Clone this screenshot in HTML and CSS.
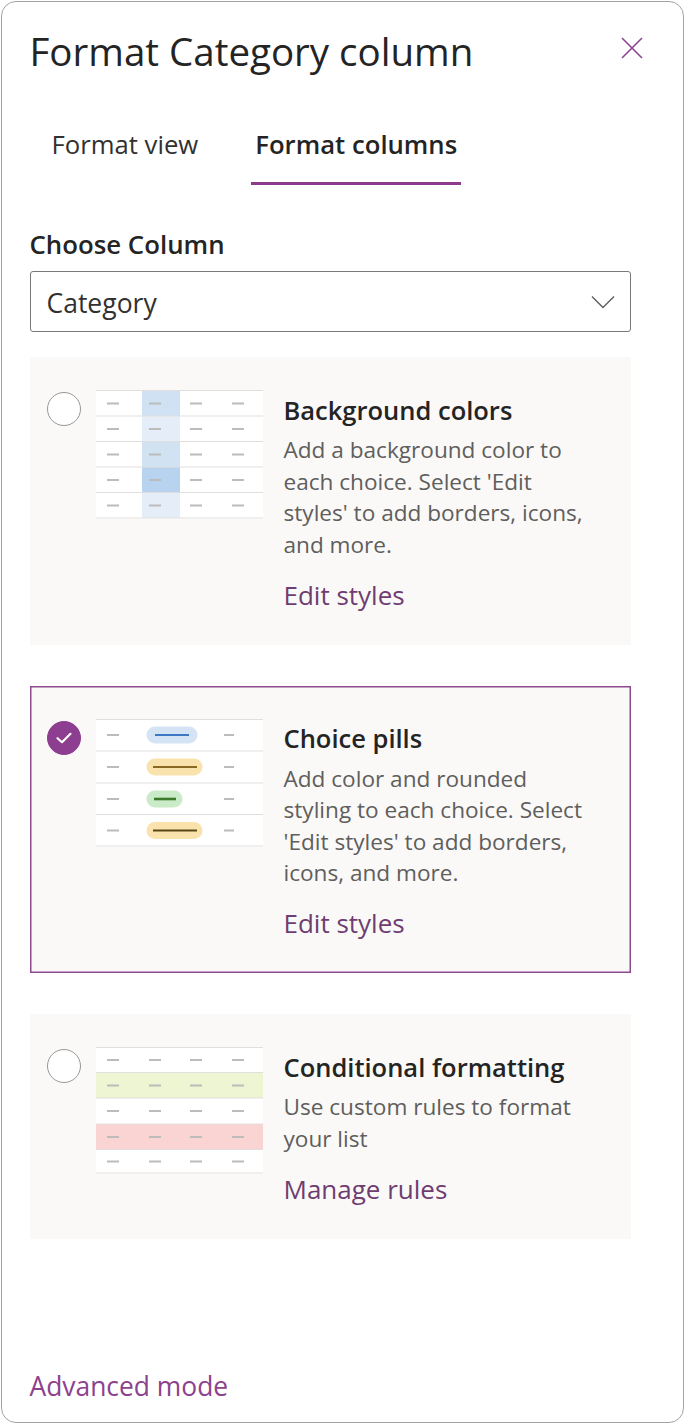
FILE: index.html
```html
<!DOCTYPE html>
<html lang="en">
<head>
<meta charset="utf-8">
<title>Format Category column</title>
<link rel="stylesheet" href="styles.css">
</head>
<body>
<div class="panel">
  <header class="header">
    <h1 class="title">Format Category column</h1>
    <button class="close" aria-label="Close">
      <svg width="22" height="22" viewBox="0 0 22 22"><path d="M1 1 L21 21 M21 1 L1 21" stroke="#8e4290" stroke-width="1.6" fill="none"/></svg>
    </button>
  </header>

  <nav class="tabs">
    <div class="tab">Format view</div>
    <div class="tab active">Format columns</div>
  </nav>

  <div class="field-label">Choose Column</div>
  <div class="dropdown">
    <span class="dropdown-value">Category</span>
    <svg class="chevron" width="24" height="14" viewBox="0 0 24 14"><path d="M1 1.5 L12 12.5 L23 1.5" stroke="#605e5c" stroke-width="1.4" fill="none"/></svg>
  </div>

  <div class="options">
    <div class="option">
      <span class="radio"></span>
      <svg class="thumb" width="167" height="129" viewBox="0 0 167 129">
        <rect x="0" y="0" width="167" height="129" fill="#ffffff"/>
        <rect x="46" y="0.5" width="38" height="25.5" fill="#cfe1f3"/>
        <rect x="46" y="26" width="38" height="25.5" fill="#e5eef8"/>
        <rect x="46" y="51.5" width="38" height="25.5" fill="#d1e3f3"/>
        <rect x="46" y="77" width="38" height="25.5" fill="#b7d3ef"/>
        <rect x="46" y="102.5" width="38" height="25.5" fill="#e5eef8"/>
        <g stroke="#e1dfdd" stroke-width="1">
          <line x1="0" y1="0.5" x2="167" y2="0.5"/>
          <line x1="0" y1="26" x2="167" y2="26"/>
          <line x1="0" y1="51.5" x2="167" y2="51.5"/>
          <line x1="0" y1="77" x2="167" y2="77"/>
          <line x1="0" y1="102.5" x2="167" y2="102.5"/>
          <line x1="0" y1="128" x2="167" y2="128"/>
        </g>
        <g stroke="#bebcba" stroke-width="1.8">
          <path d="M11 13.5h12M53 13.5h12M94 13.5h12M136 13.5h12"/>
          <path d="M11 39h12M53 39h12M94 39h12M136 39h12"/>
          <path d="M11 64.5h12M53 64.5h12M94 64.5h12M136 64.5h12"/>
          <path d="M11 90h12M53 90h12M94 90h12M136 90h12"/>
          <path d="M11 115.5h12M53 115.5h12M94 115.5h12M136 115.5h12"/>
        </g>
      </svg>
      <div class="option-text">
        <div class="option-title">Background colors</div>
        <div class="option-desc">Add a background color to each choice. Select 'Edit styles' to add borders, icons, and more.</div>
        <a class="option-link">Edit styles</a>
      </div>
    </div>

    <div class="option selected">
      <span class="radio checked">
        <svg width="18" height="14" viewBox="0 0 18 14"><path d="M2.5 7.2 L7 11.2 L15.5 2.8" stroke="#ffffff" stroke-width="2.2" fill="none" stroke-linecap="round" stroke-linejoin="round"/></svg>
      </span>
      <svg class="thumb" width="167" height="128" viewBox="0 0 167 128">
        <rect x="0" y="0" width="167" height="128" fill="#ffffff"/>
        <g stroke="#e1dfdd" stroke-width="1">
          <line x1="0" y1="0.5" x2="167" y2="0.5"/>
          <line x1="0" y1="32" x2="167" y2="32"/>
          <line x1="0" y1="64" x2="167" y2="64"/>
          <line x1="0" y1="95.5" x2="167" y2="95.5"/>
          <line x1="0" y1="127" x2="167" y2="127"/>
        </g>
        <g stroke="#bebcba" stroke-width="1.8">
          <path d="M11 16h12M128 16h10"/>
          <path d="M11 48h12M128 48h10"/>
          <path d="M11 80h12M128 80h10"/>
          <path d="M11 111.5h12M128 111.5h10"/>
        </g>
        <rect x="50.5" y="7.5" width="51" height="17" rx="8.5" fill="#d4e4f5"/>
        <line x1="59" y1="16" x2="93" y2="16" stroke="#3c78c3" stroke-width="1.8"/>
        <rect x="50.5" y="39.5" width="56" height="17" rx="8.5" fill="#fae2ad"/>
        <line x1="57" y1="48" x2="101" y2="48" stroke="#8a6a22" stroke-width="2.2"/>
        <rect x="50.5" y="71.5" width="36" height="17" rx="8.5" fill="#c9ebc8"/>
        <line x1="58" y1="80" x2="80" y2="80" stroke="#3d7a2b" stroke-width="2.6"/>
        <rect x="50.5" y="103" width="56" height="17" rx="8.5" fill="#fae2ad"/>
        <line x1="57" y1="111.5" x2="101" y2="111.5" stroke="#5a4612" stroke-width="2.2"/>
      </svg>
      <div class="option-text">
        <div class="option-title">Choice pills</div>
        <div class="option-desc">Add color and rounded styling to each choice. Select 'Edit styles' to add borders, icons, and more.</div>
        <a class="option-link">Edit styles</a>
      </div>
    </div>

    <div class="option">
      <span class="radio"></span>
      <svg class="thumb" width="167" height="127" viewBox="0 0 167 127">
        <rect x="0" y="0" width="167" height="127" fill="#ffffff"/>
        <rect x="0" y="25.5" width="167" height="25.5" fill="#eef5d2"/>
        <rect x="0" y="77" width="167" height="25.5" fill="#fad3d3"/>
        <g stroke="#e1dfdd" stroke-width="1">
          <line x1="0" y1="0.5" x2="167" y2="0.5"/>
          <line x1="0" y1="25.5" x2="167" y2="25.5"/>
          <line x1="0" y1="51" x2="167" y2="51"/>
          <line x1="0" y1="77" x2="167" y2="77"/>
          <line x1="0" y1="102.5" x2="167" y2="102.5"/>
          <line x1="0" y1="126" x2="167" y2="126"/>
        </g>
        <g stroke="#bebcba" stroke-width="1.8">
          <path d="M11 13h12M53 13h12M94 13h12M136 13h12"/>
          <path d="M11 38.5h12M53 38.5h12M94 38.5h12M136 38.5h12"/>
          <path d="M11 64h12M53 64h12M94 64h12M136 64h12"/>
          <path d="M11 90h12M53 90h12M94 90h12M136 90h12"/>
          <path d="M11 114.5h12M53 114.5h12M94 114.5h12M136 114.5h12"/>
        </g>
      </svg>
      <div class="option-text">
        <div class="option-title">Conditional formatting</div>
        <div class="option-desc">Use custom rules to format your list</div>
        <a class="option-link">Manage rules</a>
      </div>
    </div>
  </div>

  <a class="advanced">Advanced mode</a>
</div>
</body>
</html>
```

FILE: styles.css
```css
* { box-sizing: border-box; }

html, body {
  margin: 0;
  padding: 0;
  background: #ffffff;
}

body {
  font-family: "Open Sans", "Noto Sans", "Liberation Sans", sans-serif;
  color: #323130;
}

.panel {
  margin: 1px;
  width: 683px;
  height: 1422px;
  border: 1.5px solid #a3a3a3;
  border-radius: 15px;
  padding: 25px 52.5px 19.5px 27.5px;
  display: flex;
  flex-direction: column;
  background: #ffffff;
}

.header {
  display: flex;
  justify-content: space-between;
  align-items: flex-start;
}

.title {
  margin: 0;
  font-size: 38.5px;
  line-height: 48px;
  font-weight: 400;
  color: #242424;
}

.close {
  margin: 10px -12px 0 0;
  padding: 0;
  border: 0;
  background: transparent;
  width: 22px;
  height: 22px;
  display: block;
}

.close svg { display: block; }

.tabs {
  display: flex;
  margin: 52px 0 0 18px;
  gap: 49px;
}

.tab {
  padding: 0 4px 19px;
  font-size: 25.7px;
  line-height: 36px;
  color: #323130;
  border-bottom: 3px solid transparent;
}

.tab.active {
  font-weight: 600;
  color: #242424;
  border-bottom-color: #8b3a8c;
}

.field-label {
  margin-top: 43px;
  font-size: 25.8px;
  line-height: 32px;
  font-weight: 600;
  color: #242424;
}

.dropdown {
  margin-top: 11px;
  height: 61px;
  border: 1px solid #7a7877;
  border-radius: 3px;
  display: flex;
  align-items: center;
  justify-content: space-between;
  padding: 2px 15px 0 16px;
}

.dropdown-value {
  font-size: 26.5px;
  line-height: 34px;
  color: #323130;
}

.chevron { display: block; margin-top: -2px; }

.options {
  margin-top: 25px;
  display: flex;
  flex-direction: column;
  gap: 41px;
}

.option {
  display: flex;
  align-items: flex-start;
  background: #faf9f8;
  padding: 33px 36px 33px 17px;
}

.option.selected {
  box-shadow: inset 0 0 0 1.5px #8e4a8f;
}

.radio {
  flex: none;
  width: 34px;
  height: 34px;
  margin-top: 2px;
  margin-right: 15px;
  border-radius: 50%;
  border: 1.5px solid #9a9896;
  background: #ffffff;
  display: flex;
  align-items: center;
  justify-content: center;
}

.radio.checked {
  background: #8e3e90;
  border-color: #8e3e90;
}

.radio svg { display: block; }

.thumb {
  flex: none;
  display: block;
  margin-right: 21px;
}

.option-text {
  flex: 1;
  margin-top: 3.5px;
}

.option-title {
  font-size: 25.5px;
  line-height: 32px;
  font-weight: 600;
  color: #242424;
}

.option-desc {
  margin-top: 8.5px;
  font-size: 22.6px;
  line-height: 31.5px;
  color: #605e5c;
}

.option-link {
  display: block;
  margin-top: 17.5px;
  font-size: 26px;
  line-height: 34px;
  color: #6f3d70;
  cursor: pointer;
}

.advanced {
  margin-top: auto;
  font-size: 26.4px;
  line-height: 34px;
  color: #8c428d;
  cursor: pointer;
}
```
